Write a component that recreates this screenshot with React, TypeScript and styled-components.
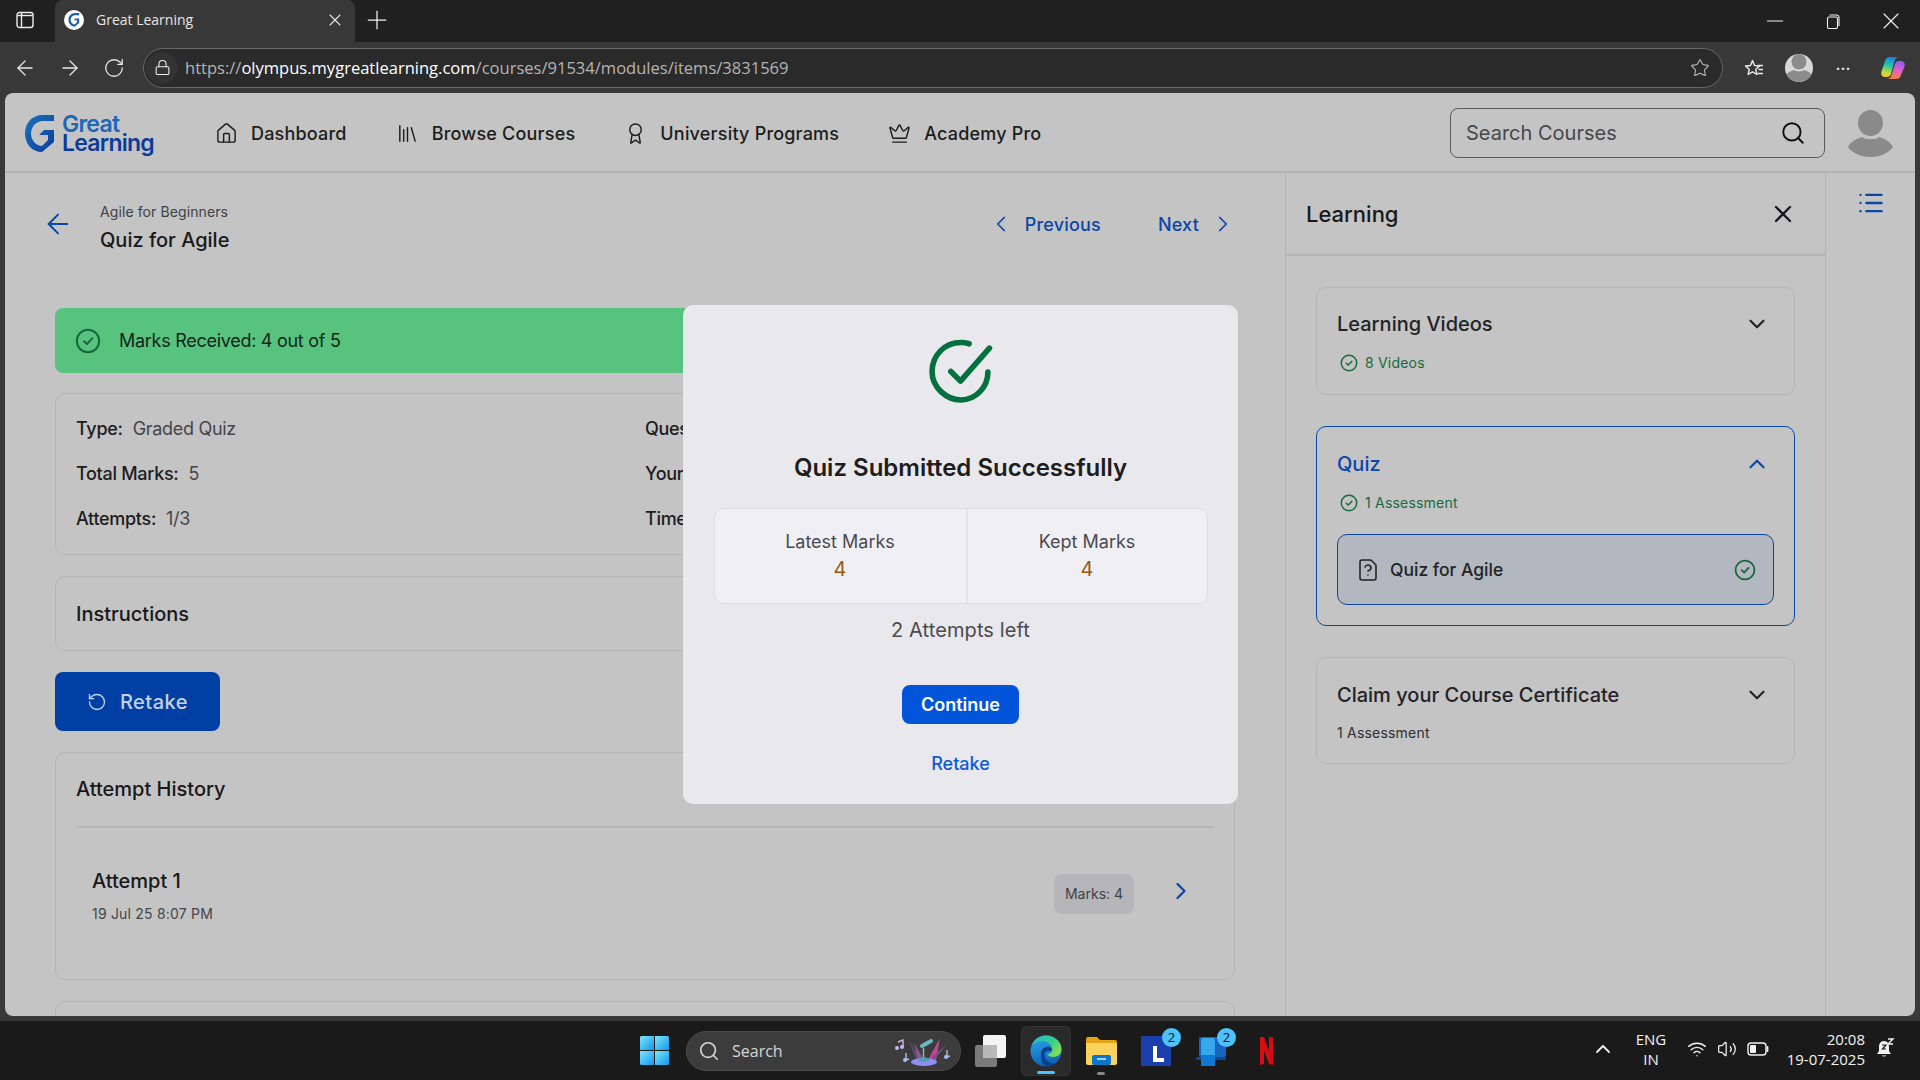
import styled, { createGlobalStyle } from 'styled-components';
import {
  Award,
  ChevronDown,
  ChevronLeft,
  ChevronRight,
  ChevronUp,
  Crown,
  FileQuestion,
  House,
  Library,
  List,
  Lock,
  Minus,
  Plus,
  RotateCcw,
  RotateCw,
  Search,
  Star,
  ArrowLeft,
  ArrowRight,
  Volume2,
  Wifi,
  X,
} from 'lucide-react';

const GlobalStyle = createGlobalStyle`
  html, body {
    margin: 0;
    padding: 0;
    overflow: hidden;
  }
  * {
    box-sizing: border-box;
  }
  body {
    font-family: Inter, "Liberation Sans", sans-serif;
  }
`;

const Screen = styled.div`
  width: 1920px;
  height: 1080px;
  display: flex;
  flex-direction: column;
  background: #383838;
  overflow: hidden;
`;

/* browser chrome */
const TabStrip = styled.div`
  height: 42px;
  flex: none;
  background: #202020;
  display: flex;
  align-items: stretch;
  color: #f0f0f0;
`;

const SideToggle = styled.div`
  width: 55px;
  padding: 0 6px 2px 0;
  display: flex;
  align-items: center;
  justify-content: center;
`;

const Tab = styled.div`
  width: 300px;
  background: #383838;
  border-radius: 8px 8px 0 0;
  display: flex;
  align-items: center;
  padding: 0 10px 2px 9px;
  font: 14px "Open Sans", sans-serif;
  color: #e6e6e6;
`;

const Favicon = styled.div`
  width: 20px;
  height: 20px;
  border-radius: 50%;
  background: #fff;
  display: flex;
  align-items: center;
  justify-content: center;
  margin-right: 12px;
`;

const TabTitle = styled.span`
  flex: 1;
  margin-top: -1px;
`;

const NewTab = styled.div`
  width: 44px;
  padding-bottom: 2px;
  display: flex;
  align-items: center;
  justify-content: center;
`;

const WindowControls = styled.div`
  margin-left: auto;
  display: flex;
  align-items: center;
`;

const WindowButton = styled.div`
  width: 58px;
  display: flex;
  justify-content: center;
`;

const Toolbar = styled.div`
  height: 51px;
  flex: none;
  display: flex;
  align-items: center;
  padding: 0 15px 0 13px;
  color: #e8e8e8;
`;

const ToolButton = styled.div`
  width: 24px;
  height: 24px;
  display: flex;
  align-items: center;
  justify-content: center;
  margin-right: 21px;
`;

const AddressBar = styled.div`
  width: 1580px;
  height: 40px;
  margin-left: -3px;
  flex: none;
  background: #2a2a2a;
  border: 1px solid #686868;
  border-radius: 20px;
  display: flex;
  align-items: center;
  padding: 0 10px 0 2px;
  font: 16.55px "Open Sans", sans-serif;
  color: #b5b5b5;
`;

const LockWrap = styled.div`
  width: 32px;
  height: 32px;
  border-radius: 50%;
  background: #333;
  display: flex;
  align-items: center;
  justify-content: center;
  margin-right: 7px;
`;

const UrlHost = styled.span`
  color: #fff;
`;

const AddressStar = styled.div`
  margin-left: auto;
  display: flex;
  padding-right: 2px;
  color: #bdbdbd;
`;

const ToolbarRight = styled.div`
  flex: 1;
  display: flex;
  align-items: center;
  gap: 20px;
  padding-left: 20px;
`;

const ProfileDot = styled.div`
  width: 28px;
  height: 28px;
  border-radius: 50%;
  background: #d8d8d8;
  overflow: hidden;
  display: flex;
`;

const Dots = styled.span`
  font: 700 14px "Open Sans", sans-serif;
  letter-spacing: 1px;
  line-height: 14px;
  margin: -6px 9px 0 3px;
`;

/* page */
const Page = styled.div`
  flex: 1;
  min-height: 0;
  margin: 0 5px 5px 5px;
  background: #c4c4c4;
  border-radius: 8px;
  display: flex;
  flex-direction: column;
  position: relative;
  overflow: hidden;
`;

const Header = styled.header`
  height: 80px;
  flex: none;
  border-bottom: 2px solid #b4b4b4;
  display: flex;
  align-items: center;
  padding: 2px 15px 0 20px;
`;

const Logo = styled.div`
  width: 130px;
  display: flex;
  gap: 7px;
  align-items: flex-start;
  margin-top: 1px;
`;

const LogoText = styled.div`
  font-weight: 600;
  font-size: 23px;
  line-height: 19px;
  letter-spacing: -0.75px;
  color: #0b3c9a;
`;

const LogoGreat = styled.div`
  color: #1a68b6;
`;

const Nav = styled.nav`
  display: flex;
  align-items: center;
  gap: 49px;
  margin-left: 60px;
`;

const NavItem = styled.a`
  display: flex;
  align-items: center;
  gap: 13px;
  font-size: 18px;
  font-weight: 500;
  letter-spacing: 0.2px;
  color: #1c1c1c;
`;

const SearchBox = styled.div`
  width: 375px;
  height: 50px;
  margin-left: auto;
  border: 1px solid #5a5a5e;
  border-radius: 8px;
  display: flex;
  align-items: center;
  justify-content: space-between;
  padding: 0 18px 0 15px;
  font-size: 20px;
  color: #47474b;
`;

const HeaderAvatar = styled.div`
  width: 45px;
  height: 47px;
  margin: 0 7px 0 23px;
`;

const Body = styled.div`
  flex: 1;
  min-height: 0;
  display: flex;
`;

const Main = styled.main`
  width: 1280px;
  flex: none;
  padding: 29px 50px 0;
  display: flex;
  flex-direction: column;
  gap: 21px;
  overflow: hidden;
`;

const TopRow = styled.div`
  height: 52px;
  flex: none;
  margin: 0 -1px 33px -13px;
  display: flex;
  align-items: center;
`;

const BackLink = styled.div`
  width: 58px;
  display: flex;
  color: #0b46a8;
  margin-top: -8px;
`;

const Crumbs = styled.div`
  display: flex;
  flex-direction: column;
  gap: 4px;
`;

const CrumbParent = styled.div`
  font-size: 14px;
  line-height: 20px;
  letter-spacing: 0.1px;
  color: #3f3f46;
`;

const CrumbTitle = styled.div`
  font-size: 20px;
  line-height: 28px;
  font-weight: 500;
  color: #18181b;
`;

const Pager = styled.div`
  margin-left: auto;
  display: flex;
  align-items: center;
  margin-top: -8px;
  gap: 57px;
`;

const PagerLink = styled.div`
  display: flex;
  align-items: center;
  gap: 11px;
  font-size: 18px;
  font-weight: 500;
  letter-spacing: 0.2px;
  color: #0b46a8;
`;

const Banner = styled.div`
  height: 65px;
  flex: none;
  margin-bottom: -1px;
  background: #57c37f;
  border-radius: 8px;
  display: flex;
  align-items: center;
  gap: 18px;
  padding: 0 20px;
  font-size: 18px;
  letter-spacing: -0.28px;
  color: #10261a;
`;

const Card = styled.section`
  flex: none;
  border: 1px solid #b5b5b5;
  border-radius: 10px;
  padding: 0 20px;
`;

const InfoGrid = styled(Card)`
  padding-top: 23px;
  padding-bottom: 23px;
  display: grid;
  grid-template-columns: 1fr 1fr;
  row-gap: 21px;
`;

const InfoItem = styled.div`
  font-size: 18px;
  line-height: 24px;
  letter-spacing: -0.3px;
  color: #45454b;
  white-space: nowrap;
`;

const InfoLabel = styled.span`
  font-weight: 500;
  color: #1c1c1f;
  margin-right: 10px;
`;

const InstructionsCard = styled(Card)`
  height: 75px;
  display: flex;
  align-items: center;
`;

const CardTitle = styled.h2`
  margin: 0;
  font-size: 20px;
  line-height: 28px;
  font-weight: 500;
  color: #18181b;
`;

const RetakeButton = styled.button`
  width: 165px;
  height: 59px;
  flex: none;
  border: 0;
  border-radius: 8px;
  background: #0040a4;
  color: #c6d1e2;
  font-family: inherit;
  font-size: 20px;
  font-weight: 500;
  letter-spacing: 0.5px;
  display: flex;
  align-items: center;
  justify-content: center;
  gap: 13px;
`;

const HistoryCard = styled(Card)`
  height: 228px;
`;

const HistoryHead = styled.div`
  height: 75px;
  padding-bottom: 2px;
  border-bottom: 2px solid #b5b5b5;
  display: flex;
  align-items: center;
`;

const AttemptRow = styled.div`
  display: flex;
  align-items: center;
  padding: 39px 16px 0;
`;

const AttemptInfo = styled.div`
  flex: 1;
  display: flex;
  flex-direction: column;
  gap: 9px;
`;

const AttemptName = styled.div`
  font-size: 20px;
  line-height: 28px;
  font-weight: 500;
  color: #18181b;
`;

const AttemptDate = styled.div`
  font-size: 14px;
  line-height: 20px;
  letter-spacing: 0.2px;
  color: #45454b;
`;

const MarksChip = styled.div`
  width: 80px;
  height: 40px;
  border-radius: 8px;
  background: #b6b6ba;
  font-size: 14px;
  color: #3f3f46;
  display: flex;
  align-items: center;
  justify-content: center;
  margin-top: -4px;
`;

const AttemptGo = styled.div`
  width: 28px;
  margin: -9px 3px 0 33px;
  display: flex;
  color: #0b46a8;
`;

const GhostCard = styled(Card)`
  height: 60px;
`;

/* learning panel */
const Side = styled.aside`
  width: 541px;
  flex: none;
  border-left: 1px solid #b4b4b4;
  border-right: 1px solid #b4b4b4;
`;

const SideHead = styled.div`
  height: 83px;
  border-bottom: 2px solid #b4b4b4;
  display: flex;
  align-items: center;
  justify-content: space-between;
  padding: 0 28px 0 20px;
`;

const SideTitle = styled.h2`
  margin: 0;
  font-size: 22px;
  font-weight: 500;
  color: #18181b;
`;

const SideList = styled.div`
  padding: 31px 30px;
  display: flex;
  flex-direction: column;
  gap: 31px;
`;

const Module = styled.div<{ $open?: boolean; $top: number; $tail: number }>`
  border: 1px solid ${(p) => (p.$open ? '#0a46a8' : '#b5b5b5')};
  border-radius: 10px;
  padding: ${(p) => p.$top}px 20px ${(p) => p.$tail}px;
`;

const ModuleHead = styled.div<{ $open?: boolean }>`
  display: flex;
  align-items: center;
  justify-content: space-between;
  font-size: 20px;
  line-height: 28px;
  font-weight: 500;
  color: ${(p) => (p.$open ? '#0b46a8' : '#232326')};
`;

const ModuleChevron = styled.div`
  display: flex;
  margin-right: 4px;
`;

const ModuleMeta = styled.div<{ $done?: boolean }>`
  margin-top: ${(p) => (p.$done ? 15 : 14)}px;
  padding-left: ${(p) => (p.$done ? 3 : 0)}px;
  display: flex;
  align-items: center;
  gap: 7px;
  font-size: 14px;
  line-height: 20px;
  letter-spacing: 0.2px;
  color: ${(p) => (p.$done ? '#17693f' : '#2e2e33')};
`;

const LessonRow = styled.div`
  height: 71px;
  margin-top: 21px;
  border: 1px solid #0a46a8;
  border-radius: 10px;
  background: #b3b7c0;
  display: flex;
  align-items: center;
  padding: 0 17px 0 18px;
  font-size: 17.5px;
  font-weight: 500;
  color: #232326;
`;

const LessonTitle = styled.span`
  flex: 1;
  margin-left: 10px;
`;

const Rail = styled.div`
  flex: 1;
  display: flex;
  justify-content: center;
  padding-top: 16px;
  color: #0b46a8;
`;

/* modal */
const Modal = styled.div`
  position: absolute;
  left: 678px;
  top: 212px;
  width: 555px;
  height: 499px;
  border-radius: 10px;
  background: #e9e8ec;
  display: flex;
  flex-direction: column;
  align-items: center;
  padding-top: 34px;
`;

const ModalTitle = styled.h2`
  margin: 46px 0 0;
  font-size: 24px;
  line-height: 36px;
  font-weight: 600;
  color: #1d1d20;
`;

const Stats = styled.div`
  width: 494px;
  height: 96px;
  margin-top: 22px;
  border: 1px solid #dfdee3;
  border-radius: 10px;
  background: #f0eff3;
  display: flex;
`;

const Stat = styled.div<{ $wide?: boolean }>`
  flex: ${(p) => (p.$wide ? '0 0 253px' : '1')};
  ${(p) => (p.$wide ? 'border-right: 2px solid #e3e2e7;' : '')}
  display: flex;
  flex-direction: column;
  align-items: center;
  padding-top: 20px;
`;

const StatLabel = styled.div`
  font-size: 18px;
  line-height: 26px;
  color: #4a4a50;
`;

const StatValue = styled.div`
  font-size: 20px;
  line-height: 28px;
  color: #95590f;
`;

const AttemptsLeft = styled.div`
  margin-top: 12px;
  font-size: 20px;
  line-height: 28px;
  letter-spacing: 0.1px;
  color: #4a4a50;
`;

const ContinueButton = styled.button`
  width: 117px;
  height: 39px;
  margin-top: 41px;
  border: 0;
  border-radius: 8px;
  background: #0255db;
  color: #fff;
  font-family: inherit;
  font-size: 18px;
  font-weight: 600;
`;

const RetakeLink = styled.a`
  margin-top: 28px;
  font-size: 18px;
  line-height: 24px;
  font-weight: 500;
  color: #0c5bd9;
`;

/* taskbar */
const Taskbar = styled.footer`
  height: 59px;
  flex: none;
  background: #1a1a1a;
  display: flex;
  align-items: center;
  padding-left: 640px;
  color: #fff;
`;

const TaskSearch = styled.div`
  width: 275px;
  height: 40px;
  margin-left: 17px;
  background: #3c3c3c;
  border: 1px solid #4a4a4a;
  border-radius: 20px;
  display: flex;
  align-items: center;
  padding: 0 8px 0 11px;
  font: 16px "Open Sans", sans-serif;
  color: #d6d6d6;
  gap: 12px;
`;

const SearchArt = styled.div`
  margin-left: auto;
  display: flex;
`;

const TaskSlot = styled.div<{ $active?: boolean }>`
  width: 50px;
  height: 50px;
  display: flex;
  align-items: center;
  justify-content: center;
  border-radius: 5px;
  position: relative;
  ${(p) => (p.$active ? 'background: #2a2a2a; border: 1px solid #333;' : '')}
`;

const TaskApps = styled.div`
  display: flex;
  margin-left: 5px;
  gap: 5px;
`;

const RunDot = styled.span<{ $active?: boolean }>`
  position: absolute;
  bottom: 1px;
  left: 50%;
  transform: translateX(-50%);
  width: ${(p) => (p.$active ? 18 : 8)}px;
  height: 3px;
  border-radius: 2px;
  background: ${(p) => (p.$active ? '#4cc2ff' : '#8a8a8a')};
`;

const CountBadge = styled.span`
  position: absolute;
  top: 2px;
  right: 0;
  width: 19px;
  height: 19px;
  border-radius: 50%;
  background: #4cc2ff;
  color: #111;
  font: 13px "Open Sans", sans-serif;
  display: flex;
  align-items: center;
  justify-content: center;
`;

const Tray = styled.div`
  margin-left: auto;
  padding-bottom: 3px;
  display: flex;
  align-items: center;
  font: 15px "Open Sans", sans-serif;
  color: #f2f2f2;
`;

const TrayLang = styled.div`
  width: 40px;
  margin: 0 16px;
  text-align: center;
  line-height: 20px;
`;

const TrayIcons = styled.div`
  display: flex;
  align-items: center;
  gap: 10px;
`;

const TrayClock = styled.div`
  width: 96px;
  text-align: right;
  line-height: 20px;
`;

const TrayBell = styled.div`
  width: 55px;
  padding-right: 13px;
  display: flex;
  justify-content: center;
`;

const DoneIcon = ({ size = 18 }: { size?: number }) => (
  <svg width={size} height={size} viewBox="0 0 20 20" fill="none" stroke="#17693f" strokeWidth="1.6">
    <circle cx="10" cy="10" r="8.6" />
    <path d="M7 10.2l2.2 2.1L13.2 8" strokeLinecap="round" strokeLinejoin="round" />
  </svg>
);

const SuccessIcon = () => (
  <svg width="66" height="65" viewBox="0 0 64 64" fill="none" stroke="#04703f" strokeWidth="5.500" strokeLinecap="round" strokeLinejoin="round">
    <path d="M58.500 32.500C58.500 47.500 46.500 60 32 60S3.500 47.500 3.500 32 15.500 3.500 32 3.500c3 0 5.500.4 8 1.200" />
    <path d="M22 32l9.500 9.500L60 9" />
  </svg>
);

const GreatLearningMark = () => (
  <svg width="30" height="38" viewBox="0 0 30 38">
    <defs>
      <linearGradient id="gmark" x1="0" y1="0" x2="1" y2="1">
        <stop offset="0" stopColor="#1b74bd" />
        <stop offset="1" stopColor="#0b3c9a" />
      </linearGradient>
    </defs>
    <path
      fill="url(#gmark)"
      d="M29 0v6H18C11 6 6 12 6 18.500S11 31 17 31l6-6v-5H14l5-5h10v12L17 37C7 37 0 29 0 18.500S7 0 18 0z"
    />
  </svg>
);

const Silhouette = ({ color }: { color: string }) => (
  <svg width="100%" height="100%" viewBox="0 0 45 47">
    <ellipse cx="22.500" cy="13" rx="12.500" ry="13" fill={color} />
    <path d="M0 37c3-6 10-9 14-10 3 3 14 3 17 0 4 1 11 4 14 10-4 6-13 10-22.500 10S4 43 0 37z" fill={color} />
  </svg>
);

const SideToggleIcon = () => (
  <svg width="18" height="18" viewBox="0 0 18 18" fill="none" stroke="#ededed" strokeWidth="1.400">
    <rect x="1" y="1.500" width="16" height="15" rx="2.500" />
    <path d="M5.500 2v14" />
    <path d="M1.500 4.500h15" />
  </svg>
);

const RestoreIcon = () => (
  <svg width="14" height="15" viewBox="0 0 14 15" fill="none" stroke="#f0f0f0" strokeWidth="1.100">
    <rect x="1.500" y="3" width="10" height="11.500" rx="1.500" />
    <path d="M3.500 1h7a2.500 2.500 0 0 1 2.500 2.500V12" />
  </svg>
);

const FavoritesIcon = () => (
  <svg width="22" height="22" viewBox="0 0 22 22" fill="none" stroke="#ececec" strokeWidth="1.400" strokeLinejoin="round">
    <path d="M8.500 2.500l2 5 5 .5-3.800 3.400 1.200 5.100-4.400-2.700-4.400 2.700 1.200-5.100L1.500 8l5-.5z" transform="translate(1 1)" />
    <path d="M15 8.500h5M15.500 12.500h4.500M14.500 16.500h5.500" />
  </svg>
);

const CopilotIcon = () => (
  <svg width="26" height="26" viewBox="0 0 26 26">
    <defs>
      <linearGradient id="copA" x1="0.600" y1="0" x2="0.400" y2="1">
        <stop offset="0" stopColor="#1583e6" />
        <stop offset="0.45" stopColor="#25c6a8" />
        <stop offset="0.8" stopColor="#b9dc3a" />
        <stop offset="1" stopColor="#f5c52c" />
      </linearGradient>
      <linearGradient id="copB" x1="0.600" y1="0" x2="0.400" y2="1">
        <stop offset="0" stopColor="#8b5cf0" />
        <stop offset="0.5" stopColor="#e35fc8" />
        <stop offset="1" stopColor="#f7803c" />
      </linearGradient>
    </defs>
    <path d="M10 2h9c-2 0-3.500 1-4.500 4L11 19c-.6 2-2 3-4 3H5c-3 0-4.500-2.500-3.500-5.500L5 6c1-3 2.500-4 5-4z" fill="url(#copA)" />
    <path d="M16 24H7c2 0 3.500-1 4.500-4L15 9c.6-2 2-3 4-3h2c3 0 4.500 2.500 3.500 5.500L21 20c-1 3-2.500 4-5 4z" fill="url(#copB)" />
  </svg>
);

const WindowsLogo = () => (
  <svg width="29" height="29" viewBox="0 0 29 29">
    <defs>
      <linearGradient id="winA" x1="0" y1="0" x2="1" y2="1">
        <stop offset="0" stopColor="#7fe6fb" />
        <stop offset="1" stopColor="#1097ec" />
      </linearGradient>
    </defs>
    <path d="M0 1.500A1.500 1.500 0 0 1 1.500 0H14v14H0z" fill="url(#winA)" />
    <path d="M15 0h12.500A1.500 1.500 0 0 1 29 1.500V14H15z" fill="url(#winA)" />
    <path d="M0 15h14v14H1.500A1.500 1.500 0 0 1 0 27.500z" fill="url(#winA)" />
    <path d="M15 15h14v12.500a1.500 1.500 0 0 1-1.500 1.500H15z" fill="url(#winA)" />
  </svg>
);

const SearchWidgetArt = () => (
  <svg width="58" height="36" viewBox="9 4 58 36" fill="none">
    <path d="M24 11l12 20h-5z" fill="#5f4a72" />
    <path d="M29 14l10 17h-6z" fill="#8a5a8e" />
    <path d="M55 9l-4 22h-8z" fill="#c0488f" />
    <path d="M63 14L49 31h-5z" fill="#7a4f86" />
    <ellipse cx="39" cy="33" rx="13" ry="4" fill="#8f8df2" />
    <ellipse cx="39" cy="30.500" rx="6" ry="2" fill="#4f9db4" />
    <path d="M38.500 30v-11" stroke="#8fb2c0" strokeWidth="1.500" />
    <path d="M37 17l9-5" stroke="#6fb6c4" strokeWidth="4" strokeLinecap="round" />
    <path d="M13 13l5-2v7" stroke="#c9b8f2" strokeWidth="1.400" />
    <circle cx="12" cy="19" r="2" fill="#c9b8f2" />
    <circle cx="17" cy="18" r="2" fill="#c9b8f2" />
    <path d="M21 24v7l3-1" stroke="#b0bcf4" strokeWidth="1.400" />
    <circle cx="20" cy="31" r="2" fill="#b0bcf4" />
    <path d="M62 21v7l3-1" stroke="#b0bcf4" strokeWidth="1.400" />
    <circle cx="61" cy="28" r="2" fill="#b0bcf4" />
  </svg>
);

const TaskViewIcon = () => (
  <svg width="32" height="32" viewBox="0 0 32 32">
    <rect x="0" y="10" width="22" height="22" rx="2" fill="#7a7a7a" />
    <rect x="8" y="0" width="23" height="23" rx="2" fill="#f4f4f4" />
    <rect x="8" y="10" width="14" height="13" fill="#b8b8b8" />
  </svg>
);

const EdgeIcon = () => (
  <svg width="32" height="32" viewBox="0 0 32 32">
    <defs>
      <linearGradient id="edgeA" x1="0.200" y1="0" x2="0.500" y2="1">
        <stop offset="0" stopColor="#2aa9e8" />
        <stop offset="1" stopColor="#0c5fb8" />
      </linearGradient>
      <linearGradient id="edgeB" x1="0" y1="0" x2="1" y2="0.700">
        <stop offset="0" stopColor="#28b8d8" />
        <stop offset="0.6" stopColor="#36cf8c" />
        <stop offset="1" stopColor="#86df52" />
      </linearGradient>
    </defs>
    <circle cx="16" cy="16" r="15.500" fill="url(#edgeA)" />
    <path d="M16 .5C25 .5 31.500 7 31.500 14c0 5-4 8-8.500 8-3 0-5-1-6-2.500 3-.5 5-2.500 5-5C22 9 17 6 12 6 8 6 4 8 1.500 11 3.500 5 9 .5 16 .5z" fill="url(#edgeB)" />
    <path d="M11 19c0-5 4-8 9-7 2 .5 2.500 3 1 4.500-1.500-1-4-1-5.500.5-2 2-1 6 2 9 2 2 6 3.500 10 2-3 2.500-7 3.500-11 3-5-1.500-5.500-7-5.500-12.500z" fill="#0b3f8e" />
  </svg>
);

const FolderIcon = () => (
  <svg width="31" height="29" viewBox="0 0 31 29">
    <path d="M0 3a2 2 0 0 1 2-2h9l3 3h15a2 2 0 0 1 2 2v3H0z" fill="#e5a313" />
    <path d="M0 7h29a2 2 0 0 1 2 2v18a2 2 0 0 1-2 2H2a2 2 0 0 1-2-2z" fill="#fbd35c" />
    <rect x="6" y="19" width="19" height="10" rx="2" fill="#0c77c8" />
    <rect x="11" y="22" width="9" height="2" fill="#9ed3f5" />
  </svg>
);

const LearnIcon = () => (
  <svg width="30" height="30" viewBox="0 0 30 30">
    <rect width="30" height="30" fill="#1c3fae" />
    <path d="M12 10h4v12h7v4H12z" fill="#fff" />
  </svg>
);

const PhoneLinkIcon = () => (
  <svg width="30" height="32" viewBox="0 0 30 32">
    <rect x="3" y="2" width="27" height="20" rx="2" fill="#1464c0" />
    <rect x="0" y="22" width="30" height="3" rx="1" fill="#0d4a94" />
    <rect x="5" y="3" width="14" height="28" rx="2" fill="#38a6ec" />
    <rect x="5" y="20" width="14" height="11" fill="#0f78d0" />
  </svg>
);

const NetflixIcon = () => (
  <svg width="13" height="28" viewBox="0 0 13 28">
    <path d="M0 0h4l5 14V0h4v28l-4-1-5-13v13l-4 1z" fill="#d30b12" />
  </svg>
);

const BatteryIcon = () => (
  <svg width="22" height="14" viewBox="0 0 22 14" fill="none">
    <rect x="1" y="1" width="18" height="12" rx="3" stroke="#f2f2f2" strokeWidth="1.400" />
    <rect x="3" y="3" width="6" height="8" rx="1" fill="#f2f2f2" />
    <path d="M20.500 5v4" stroke="#f2f2f2" strokeWidth="1.800" strokeLinecap="round" />
  </svg>
);

const SnoozeBell = () => (
  <svg width="20" height="22" viewBox="0 0 20 22" fill="#f2f2f2">
    <path d="M8 3C4.500 3 3 6 3 9v4l-2 3h14l-2-3V9c0-3-1.500-6-5-6z" />
    <path d="M5.500 17.500a3 2.500 0 0 0 5 0z" />
    <path d="M6 7h4L6.500 11H10" stroke="#1a1a1a" strokeWidth="1.200" fill="none" />
    <path d="M12 1h5l-5 5h5" stroke="#f2f2f2" strokeWidth="1.400" fill="none" />
  </svg>
);

const infoItems = [
  { label: 'Type:', value: 'Graded Quiz' },
  { label: 'Questions:', value: '5' },
  { label: 'Total Marks:', value: '5' },
  { label: 'Your Score:', value: '4' },
  { label: 'Attempts:', value: '1/3' },
  { label: 'Time Taken:', value: '2 mins' },
];

const navItems = [
  { label: 'Dashboard', Icon: House },
  { label: 'Browse Courses', Icon: Library },
  { label: 'University Programs', Icon: Award },
  { label: 'Academy Pro', Icon: Crown },
];

export default function App() {
  return (
    <Screen>
      <GlobalStyle />
      <TabStrip>
        <SideToggle>
          <SideToggleIcon />
        </SideToggle>
        <Tab>
          <Favicon>
            <svg width="12" height="14" viewBox="0 0 30 38">
              <path
                fill="#1a5fb4"
                d="M29 0v6H18C11 6 6 12 6 18.500S11 31 17 31l6-6v-5H14l5-5h10v12L17 37C7 37 0 29 0 18.500S7 0 18 0z"
              />
            </svg>
          </Favicon>
          <TabTitle>Great Learning</TabTitle>
          <X size={20} strokeWidth={1.3} />
        </Tab>
        <NewTab>
          <Plus size={30} strokeWidth={1} />
        </NewTab>
        <WindowControls>
          <WindowButton>
            <Minus size={26} strokeWidth={1} />
          </WindowButton>
          <WindowButton>
            <RestoreIcon />
          </WindowButton>
          <WindowButton>
            <X size={28} strokeWidth={1} />
          </WindowButton>
        </WindowControls>
      </TabStrip>

      <Toolbar>
        <ToolButton>
          <ArrowLeft size={26} strokeWidth={1.3} />
        </ToolButton>
        <ToolButton>
          <ArrowRight size={26} strokeWidth={1.3} />
        </ToolButton>
        <ToolButton>
          <RotateCw size={22} strokeWidth={1.4} />
        </ToolButton>
        <AddressBar>
          <LockWrap>
            <Lock size={17} strokeWidth={1.5} color="#efefef" />
          </LockWrap>
          <span>
            https://<UrlHost>olympus.mygreatlearning.com</UrlHost>/courses/91534/modules/items/3831569
          </span>
          <AddressStar>
            <Star size={20} strokeWidth={1.3} />
          </AddressStar>
        </AddressBar>
        <ToolbarRight>
          <FavoritesIcon />
          <ProfileDot>
            <Silhouette color="#8c8c8c" />
          </ProfileDot>
          <Dots>...</Dots>
          <CopilotIcon />
        </ToolbarRight>
      </Toolbar>

      <Page>
        <Header>
          <Logo>
            <GreatLearningMark />
            <LogoText>
              <LogoGreat>Great</LogoGreat>
              Learning
            </LogoText>
          </Logo>
          <Nav>
            {navItems.map(({ label, Icon }) => (
              <NavItem key={label}>
                <Icon size={23} strokeWidth={1.5} />
                {label}
              </NavItem>
            ))}
          </Nav>
          <SearchBox>
            Search Courses
            <Search size={26} strokeWidth={1.8} color="#111" />
          </SearchBox>
          <HeaderAvatar>
            <Silhouette color="#8a8a8a" />
          </HeaderAvatar>
        </Header>

        <Body>
          <Main>
            <TopRow>
              <BackLink>
                <ArrowLeft size={32} strokeWidth={1.5} />
              </BackLink>
              <Crumbs>
                <CrumbParent>Agile for Beginners</CrumbParent>
                <CrumbTitle>Quiz for Agile</CrumbTitle>
              </Crumbs>
              <Pager>
                <PagerLink>
                  <ChevronLeft size={26} strokeWidth={1.6} />
                  Previous
                </PagerLink>
                <PagerLink>
                  Next
                  <ChevronRight size={26} strokeWidth={1.6} />
                </PagerLink>
              </Pager>
            </TopRow>

            <Banner>
              <DoneIcon size={26} />
              Marks Received: 4 out of 5
            </Banner>

            <InfoGrid>
              {infoItems.map((item) => (
                <InfoItem key={item.label}>
                  <InfoLabel>{item.label}</InfoLabel>
                  {item.value}
                </InfoItem>
              ))}
            </InfoGrid>

            <InstructionsCard>
              <CardTitle>Instructions</CardTitle>
            </InstructionsCard>

            <RetakeButton>
              <RotateCcw size={20} strokeWidth={1.6} />
              Retake
            </RetakeButton>

            <HistoryCard>
              <HistoryHead>
                <CardTitle>Attempt History</CardTitle>
              </HistoryHead>
              <AttemptRow>
                <AttemptInfo>
                  <AttemptName>Attempt 1</AttemptName>
                  <AttemptDate>19 Jul 25 8:07 PM</AttemptDate>
                </AttemptInfo>
                <MarksChip>Marks: 4</MarksChip>
                <AttemptGo>
                  <ChevronRight size={30} strokeWidth={1.9} />
                </AttemptGo>
              </AttemptRow>
            </HistoryCard>

            <GhostCard />
          </Main>

          <Side>
            <SideHead>
              <SideTitle>Learning</SideTitle>
              <X size={28} strokeWidth={2} color="#18181b" />
            </SideHead>
            <SideList>
              <Module $top={22} $tail={21}>
                <ModuleHead>
                  Learning Videos
                  <ModuleChevron>
                    <ChevronDown size={26} strokeWidth={2} />
                  </ModuleChevron>
                </ModuleHead>
                <ModuleMeta $done>
                  <DoneIcon />8 Videos
                </ModuleMeta>
              </Module>
              <Module $open $top={23} $tail={20}>
                <ModuleHead $open>
                  Quiz
                  <ModuleChevron>
                    <ChevronUp size={26} strokeWidth={2} />
                  </ModuleChevron>
                </ModuleHead>
                <ModuleMeta $done>
                  <DoneIcon />1 Assessment
                </ModuleMeta>
                <LessonRow>
                  <FileQuestion size={24} strokeWidth={1.6} />
                  <LessonTitle>Quiz for Agile</LessonTitle>
                  <DoneIcon size={22} />
                </LessonRow>
              </Module>
              <Module $top={23} $tail={20}>
                <ModuleHead>
                  Claim your Course Certificate
                  <ModuleChevron>
                    <ChevronDown size={26} strokeWidth={2} />
                  </ModuleChevron>
                </ModuleHead>
                <ModuleMeta>1 Assessment</ModuleMeta>
              </Module>
            </SideList>
          </Side>

          <Rail>
            <List size={28} strokeWidth={2} />
          </Rail>
        </Body>

        <Modal>
          <SuccessIcon />
          <ModalTitle>Quiz Submitted Successfully</ModalTitle>
          <Stats>
            <Stat $wide>
              <StatLabel>Latest Marks</StatLabel>
              <StatValue>4</StatValue>
            </Stat>
            <Stat>
              <StatLabel>Kept Marks</StatLabel>
              <StatValue>4</StatValue>
            </Stat>
          </Stats>
          <AttemptsLeft>2 Attempts left</AttemptsLeft>
          <ContinueButton>Continue</ContinueButton>
          <RetakeLink>Retake</RetakeLink>
        </Modal>
      </Page>

      <Taskbar>
        <WindowsLogo />
        <TaskSearch>
          <Search size={22} strokeWidth={1.8} />
          Search
          <SearchArt>
            <SearchWidgetArt />
          </SearchArt>
        </TaskSearch>
        <TaskApps>
          <TaskSlot>
            <TaskViewIcon />
          </TaskSlot>
          <TaskSlot $active>
            <EdgeIcon />
            <RunDot $active />
          </TaskSlot>
          <TaskSlot>
            <FolderIcon />
            <RunDot />
          </TaskSlot>
          <TaskSlot>
            <LearnIcon />
            <CountBadge>2</CountBadge>
          </TaskSlot>
          <TaskSlot>
            <PhoneLinkIcon />
            <CountBadge>2</CountBadge>
          </TaskSlot>
          <TaskSlot>
            <NetflixIcon />
          </TaskSlot>
        </TaskApps>
        <Tray>
          <ChevronUp size={24} strokeWidth={1.8} />
          <TrayLang>
            ENG
            <br />
            IN
          </TrayLang>
          <TrayIcons>
            <Wifi size={20} strokeWidth={1.7} />
            <Volume2 size={20} strokeWidth={1.5} />
            <BatteryIcon />
          </TrayIcons>
          <TrayClock>
            20:08
            <br />
            19-07-2025
          </TrayClock>
          <TrayBell>
            <SnoozeBell />
          </TrayBell>
        </Tray>
      </Taskbar>
    </Screen>
  );
}
